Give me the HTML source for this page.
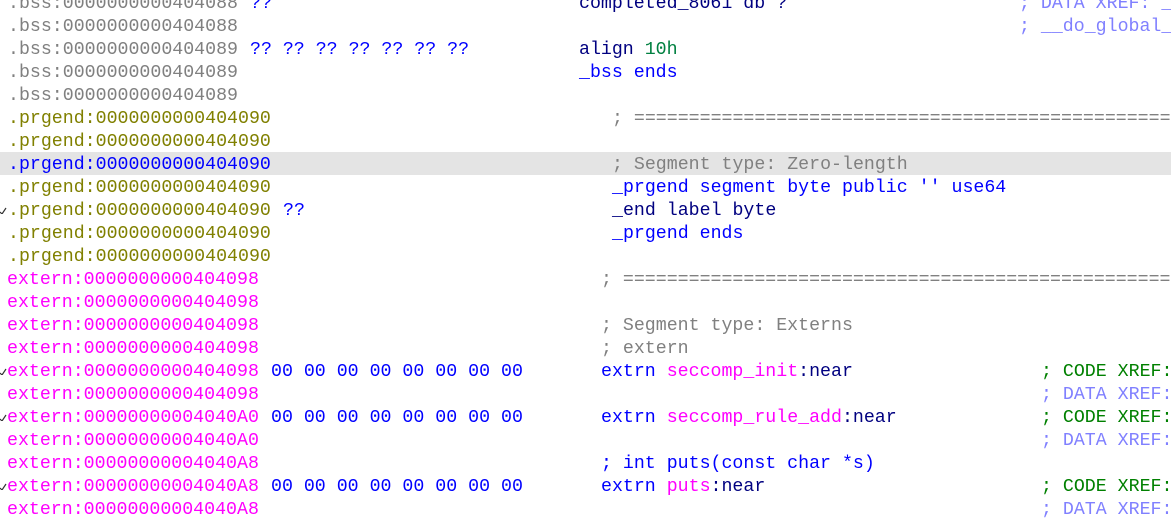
<!DOCTYPE html>
<html><head><meta charset="utf-8"><style>
body{margin:0;width:1171px;height:505px;background:#fff;overflow:hidden;position:relative;font-family:"Liberation Mono",monospace;font-size:18.25px;}
.r{position:absolute;left:0;width:1171px;height:23px;line-height:23px;white-space:pre;}
.r>span{position:absolute;top:2px}
.hl{background:#e4e4e4}
.g{color:#808080}.o{color:#808000}.m{color:#ff00ff}.b{color:#0000ff}.n{color:#000080}.c{color:#808080}.x{color:#8080ff}.cg{color:#008000}.t{color:#008040}
.k{position:absolute;left:0;top:9px;width:7px;height:7px}
</style></head><body>
<div class="r" style="top:-9px"><span class="g" style="left:8px">.bss:0000000000404088</span><span class="b" style="left:250px">??</span><span class="n" style="left:579px">completed_8061 db ?</span><span class="x" style="left:1019px">; DATA XREF: _</span></div>
<div class="r" style="top:14px"><span class="g" style="left:8px">.bss:0000000000404088</span><span class="x" style="left:1019px">; __do_global_</span></div>
<div class="r" style="top:37px"><span class="g" style="left:8px">.bss:0000000000404089</span><span class="b" style="left:250px">?? ?? ?? ?? ?? ?? ??</span><span class="n" style="left:579px">align <span class="t">10h</span></span></div>
<div class="r" style="top:60px"><span class="g" style="left:8px">.bss:0000000000404089</span><span class="b" style="left:579px">_bss ends</span></div>
<div class="r" style="top:83px"><span class="g" style="left:8px">.bss:0000000000404089</span></div>
<div class="r" style="top:106px"><span class="o" style="left:8px">.prgend:0000000000404090</span><span class="c" style="left:612px">; ==================================================</span></div>
<div class="r" style="top:129px"><span class="o" style="left:8px">.prgend:0000000000404090</span></div>
<div class="r hl" style="top:152px"><span class="b" style="left:8px">.prgend:0000000000404090</span><span class="c" style="left:612px">; Segment type: Zero-length</span></div>
<div class="r" style="top:175px"><span class="o" style="left:8px">.prgend:0000000000404090</span><span class="b" style="left:612px">_prgend segment byte public '' use64</span></div>
<div class="r" style="top:198px"><svg class="k" viewBox="0 0 7 7"><path d="M0 5 L2 7 L6 1" stroke="#333" fill="none" stroke-width="1.2"/></svg><span class="o" style="left:8px">.prgend:0000000000404090</span><span class="b" style="left:283px">??</span><span class="n" style="left:612px">_end label byte</span></div>
<div class="r" style="top:221px"><span class="o" style="left:8px">.prgend:0000000000404090</span><span class="b" style="left:612px">_prgend ends</span></div>
<div class="r" style="top:244px"><span class="o" style="left:8px">.prgend:0000000000404090</span></div>
<div class="r" style="top:267px"><span class="m" style="left:7px">extern:0000000000404098</span><span class="c" style="left:601px">; ==================================================</span></div>
<div class="r" style="top:290px"><span class="m" style="left:7px">extern:0000000000404098</span></div>
<div class="r" style="top:313px"><span class="m" style="left:7px">extern:0000000000404098</span><span class="c" style="left:601px">; Segment type: Externs</span></div>
<div class="r" style="top:336px"><span class="m" style="left:7px">extern:0000000000404098</span><span class="c" style="left:601px">; extern</span></div>
<div class="r" style="top:359px"><svg class="k" viewBox="0 0 7 7"><path d="M0 5 L2 7 L6 1" stroke="#333" fill="none" stroke-width="1.2"/></svg><span class="m" style="left:7px">extern:0000000000404098</span><span class="b" style="left:271px">00 00 00 00 00 00 00 00</span><span class="b" style="left:601px">extrn <span class="m">seccomp_init</span><span class="n">:near</span></span><span class="cg" style="left:1041px">; CODE XREF: _</span></div>
<div class="r" style="top:382px"><span class="m" style="left:7px">extern:0000000000404098</span><span class="x" style="left:1041px">; DATA XREF: _</span></div>
<div class="r" style="top:405px"><svg class="k" viewBox="0 0 7 7"><path d="M0 5 L2 7 L6 1" stroke="#333" fill="none" stroke-width="1.2"/></svg><span class="m" style="left:7px">extern:00000000004040A0</span><span class="b" style="left:271px">00 00 00 00 00 00 00 00</span><span class="b" style="left:601px">extrn <span class="m">seccomp_rule_add</span><span class="n">:near</span></span><span class="cg" style="left:1041px">; CODE XREF: _</span></div>
<div class="r" style="top:428px"><span class="m" style="left:7px">extern:00000000004040A0</span><span class="x" style="left:1041px">; DATA XREF: _</span></div>
<div class="r" style="top:451px"><span class="m" style="left:7px">extern:00000000004040A8</span><span class="b" style="left:601px">; int puts(const char *s)</span></div>
<div class="r" style="top:474px"><svg class="k" viewBox="0 0 7 7"><path d="M0 5 L2 7 L6 1" stroke="#333" fill="none" stroke-width="1.2"/></svg><span class="m" style="left:7px">extern:00000000004040A8</span><span class="b" style="left:271px">00 00 00 00 00 00 00 00</span><span class="b" style="left:601px">extrn <span class="m">puts</span><span class="n">:near</span></span><span class="cg" style="left:1041px">; CODE XREF: _</span></div>
<div class="r" style="top:497px"><span class="m" style="left:7px">extern:00000000004040A8</span><span class="x" style="left:1041px">; DATA XREF: _</span></div>
</body></html>
